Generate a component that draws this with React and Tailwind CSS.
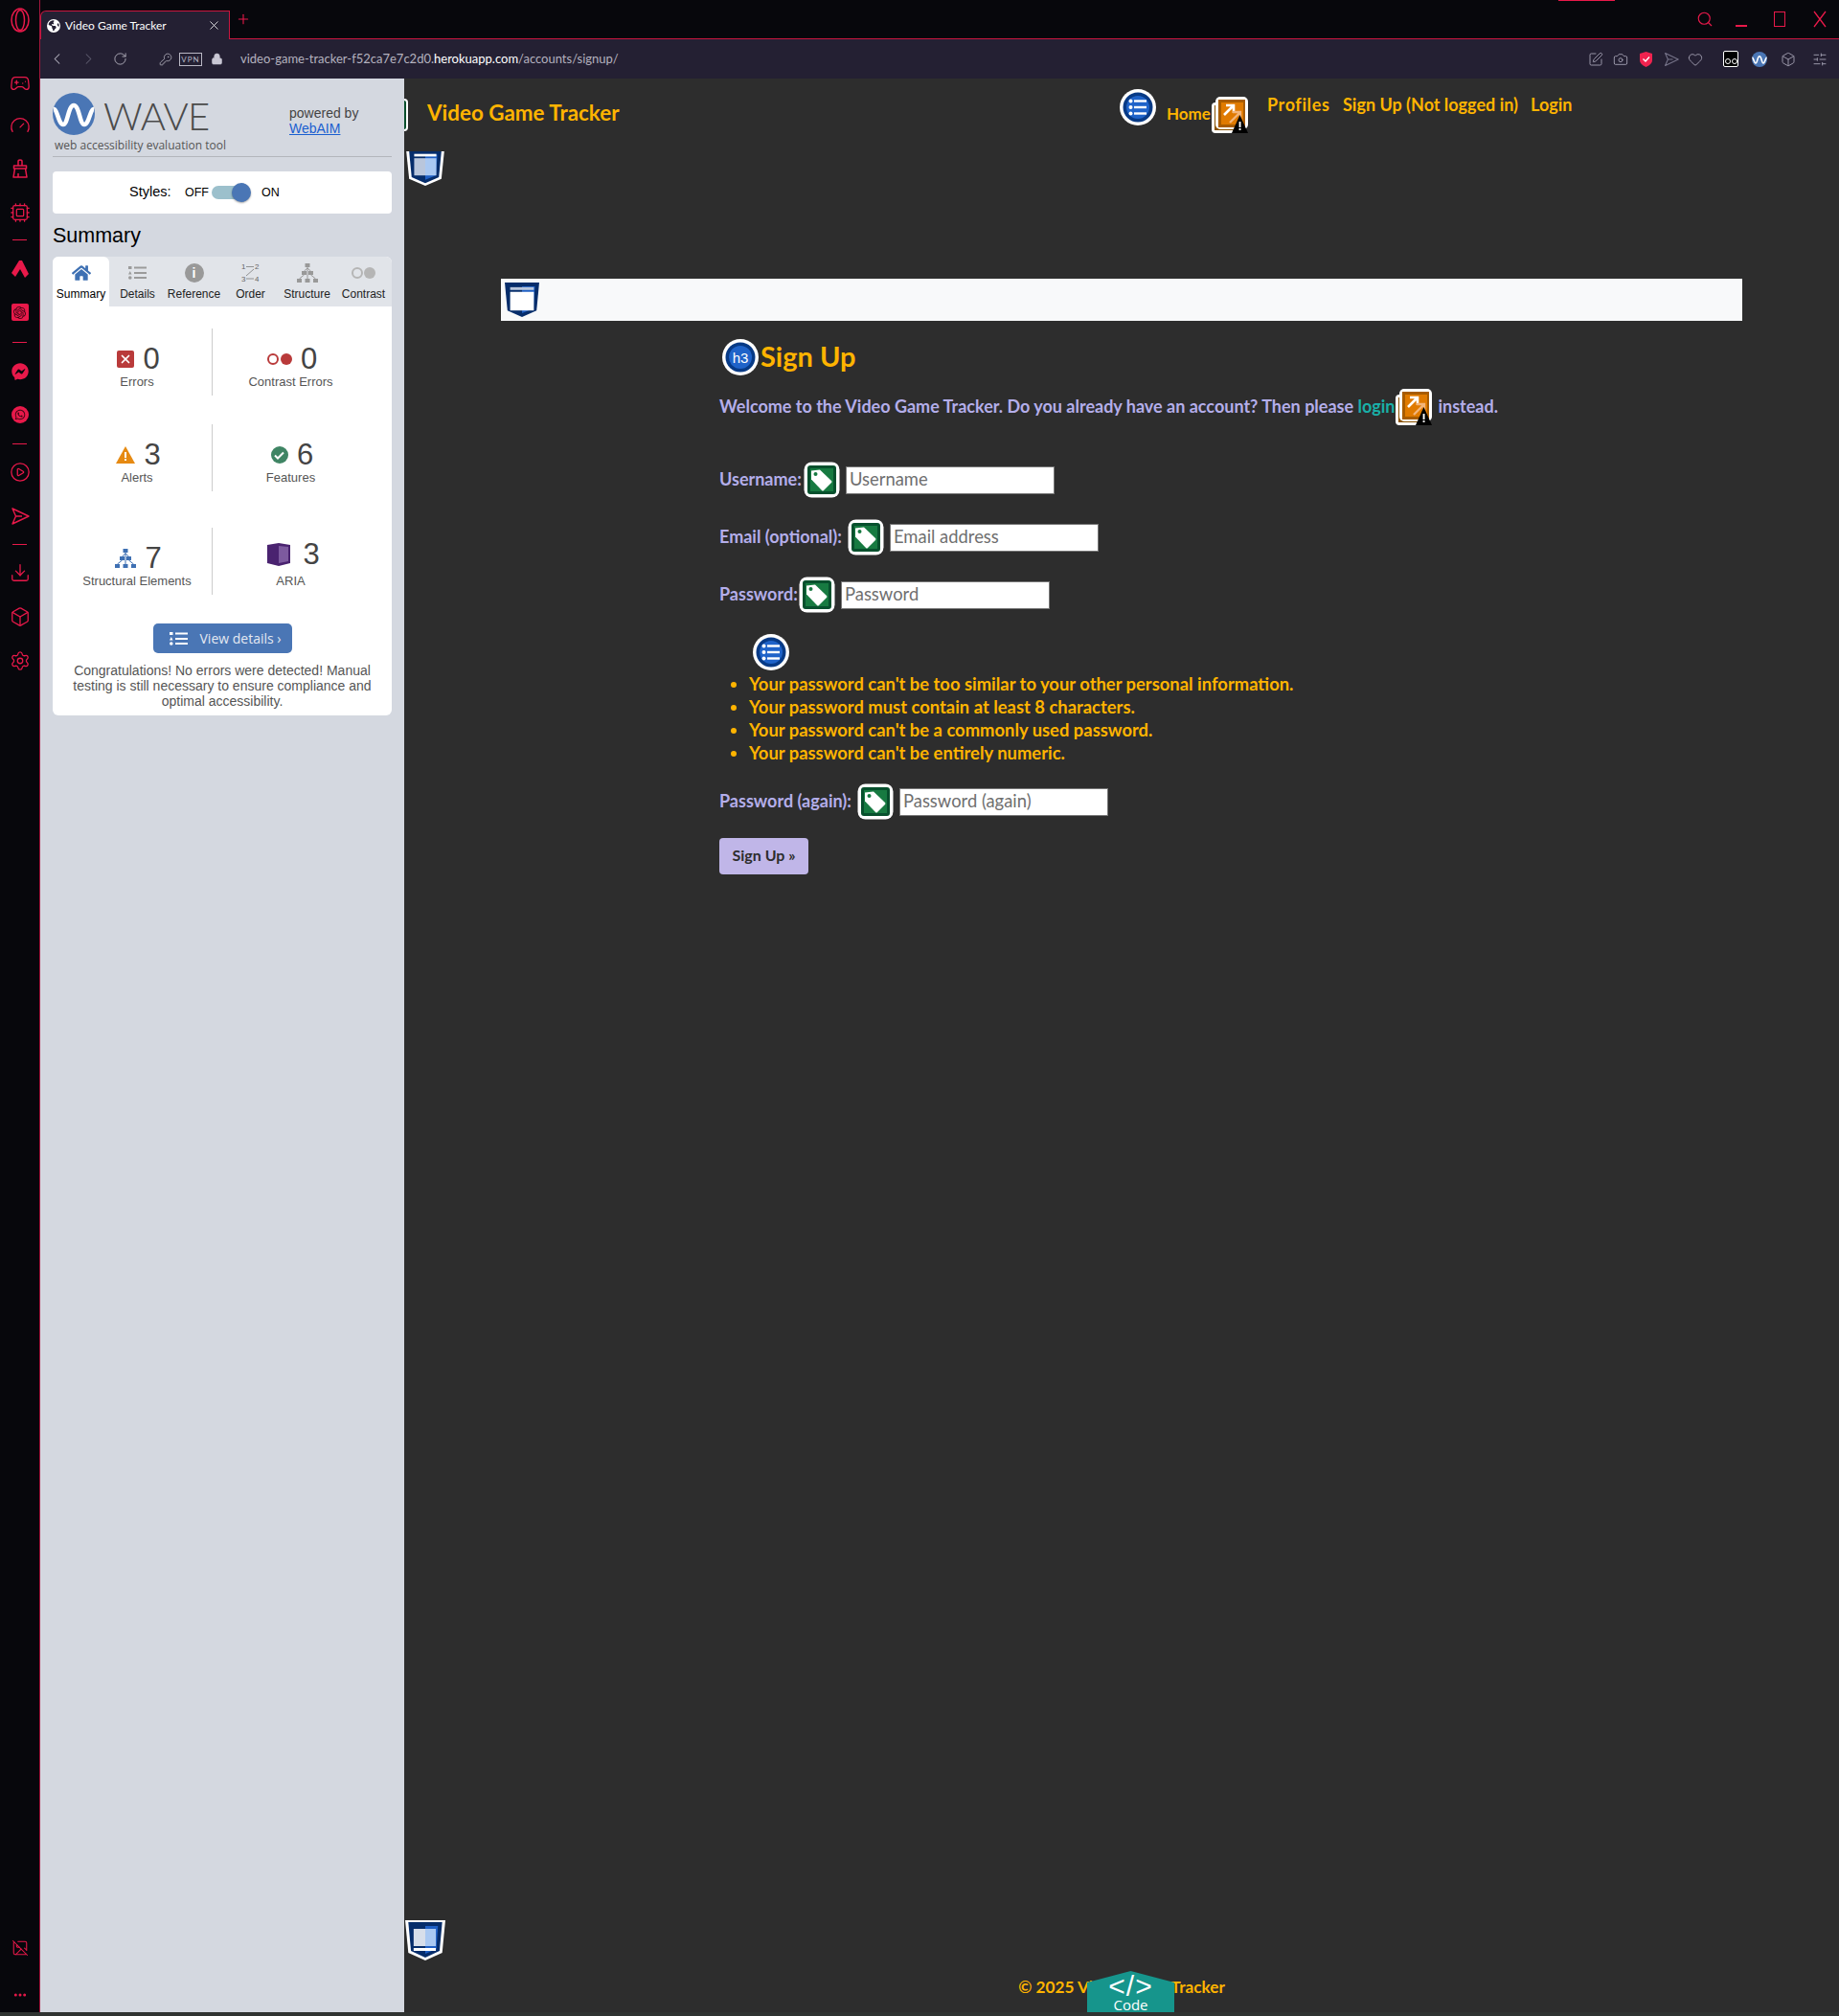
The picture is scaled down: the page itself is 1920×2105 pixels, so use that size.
import React from 'react';
import { Gamepad2, Gauge, Cpu, CirclePlay, Download, Box, Settings, Search, X, Plus, ChevronLeft, ChevronRight, RotateCw, KeyRound, Lock, Camera, Heart, SquarePen, SlidersHorizontal, Ellipsis, ImageOff } from 'lucide-react';
import { FaFacebookMessenger, FaWhatsapp, FaHome } from 'react-icons/fa';
import { SiOpenai } from 'react-icons/si';
import { FaEarthAmericas } from 'react-icons/fa6';

const red = '#e8194a';

function TagIcon() {
  return (
    <svg width="38" height="38" viewBox="0 0 38 38" className="shrink-0">
      <rect x="0.5" y="0.5" width="37" height="37" rx="8" fill="#fff" />
      <rect x="4" y="4" width="30" height="30" rx="3" fill="#07502d" />
      <rect x="7" y="7" width="24" height="24" fill="#177a41" />
      <path d="M8 9.5 L17 8.5 L29 20 Q30 21 29 22 L21 30 Q20 31 19 30 L8 18.5 Z" fill="#fff" />
      <circle cx="12.5" cy="13" r="2" fill="#177a41" />
    </svg>
  );
}

function ListIcon() {
  return (
    <svg width="38" height="38" viewBox="0 0 38 38" className="shrink-0">
      <circle cx="19" cy="19" r="19" fill="#fff" />
      <circle cx="19" cy="19" r="15.5" fill="#073a86" />
      <circle cx="19" cy="19" r="12" fill="#1f63c9" />
      <circle cx="11.5" cy="12.5" r="2" fill="#fff" />
      <circle cx="11.5" cy="19" r="2" fill="#fff" />
      <circle cx="11.5" cy="25.5" r="2" fill="#fff" />
      <rect x="15" y="11.3" width="13" height="2.4" fill="#fff" />
      <rect x="15" y="17.8" width="13" height="2.4" fill="#fff" />
      <rect x="15" y="24.3" width="13" height="2.4" fill="#fff" />
    </svg>
  );
}

function LinkIcon() {
  return (
    <svg width="38" height="38" viewBox="0 0 38 38" className="shrink-0">
      <rect x="0" y="6" width="32" height="32" rx="4" fill="#fff" />
      <rect x="3" y="9" width="28" height="26" fill="#8a5200" />
      <rect x="4" y="0" width="34" height="34" rx="5" fill="#fff" />
      <rect x="7" y="3" width="28" height="29" fill="#a85c00" />
      <rect x="10" y="6" width="23" height="23" fill="#e07a00" />
      <path d="M13 19 L23 9 M15 9 H23 V17" stroke="#fff" strokeWidth="2.6" fill="none" />
      <path d="M19 27 L29 17 M22 16 H30 V24" stroke="#f3b57a" strokeWidth="2.4" fill="none" />
      <path d="M29.5 19 L38 38 H21 Z" fill="#000" />
      <rect x="28.6" y="26" width="1.9" height="6" fill="#fff" />
      <rect x="28.6" y="33" width="1.9" height="2" fill="#fff" />
    </svg>
  );
}

function Landmark({ variant }) {
  const outline = variant !== 'main';
  const box = variant === 'main' ? '3 2 32 37' : variant === 'header' ? '0 2 38 40' : '0 0 38 42';
  return (
    <svg width={variant === 'main' ? 36 : variant === 'footer' ? 42 : 40} height={variant === 'footer' ? 42 : 36} viewBox={box} preserveAspectRatio="none" className="shrink-0">
      {outline && <path d="M0 0 H38 L35 34 L19 42 L3 34 Z" fill="#fff" />}
      <path d="M3 2 H35 L32.5 32 L19 39 L5.5 32 Z" fill="#062d6b" />
      <path d="M19 6 H31 L29.5 30 L19 35 Z" fill="#1f5fc4" />
      {variant === 'header' && <>
        <rect x="8" y="5" width="22" height="3" fill="#fff" />
        <rect x="8" y="10" width="11" height="20" fill="#b9c6dc" />
        <rect x="19" y="10" width="11" height="20" fill="#a9c8f2" />
      </>}
      {variant === 'main' && <>
        <rect x="8" y="7" width="22" height="3" fill="#b9c6dc" />
        <rect x="8" y="12" width="22" height="20" fill="#fff" />
      </>}
      {variant === 'footer' && <>
        <rect x="8" y="9" width="11" height="18" fill="#d7deea" />
        <rect x="19" y="9" width="10" height="18" fill="#a9c8f2" />
        <rect x="8" y="29" width="21" height="3" fill="#fff" />
      </>}
    </svg>
  );
}

function WaveLogo({ size }) {
  return (
    <svg width={size} height={size} viewBox="0 0 44 44" className="shrink-0">
      <circle cx="22" cy="22" r="22" fill="#4a76b5" />
      <path d="M1 17 C5 17 6 33 11 33 C16 33 16 13 22 13 C28 13 28 33 33 33 C38 33 39 17 43 17" stroke="#fff" strokeWidth="4.5" fill="none" />
    </svg>
  );
}

function StructureIcon({ color, size = 22 }) {
  return (
    <svg width={size} height={size} viewBox="0 0 22 22" fill={color}>
      <rect x="8.5" y="1" width="5" height="4" />
      <rect x="5" y="9" width="5" height="4" />
      <rect x="12" y="9" width="5" height="4" />
      <rect x="0" y="17" width="5" height="4" />
      <rect x="8.5" y="17" width="5" height="4" />
      <rect x="17" y="17" width="5" height="4" />
      <path d="M11 5 V17 M7.5 13 L2.5 17 M14.5 13 L19.5 17 M7.5 9 L11 6 L14.5 9" stroke={color} fill="none" strokeWidth="1" />
    </svg>
  );
}

function DetailsIcon({ color, w = 19, h = 14 }) {
  return (
    <svg width={w} height={h} viewBox="0 0 19 14" fill={color}>
      <rect x="0" y="0" width="3.5" height="3" />
      <path d="M1.8 5 L3.6 8.4 H0 Z" />
      <circle cx="1.8" cy="12" r="1.8" />
      <rect x="6" y="0.5" width="13" height="2" />
      <rect x="6" y="6" width="13" height="2" />
      <rect x="6" y="11" width="13" height="2" />
    </svg>
  );
}

function SendOutline({ size, color, strokeWidth = 1.4 }) {
  return (
    <svg width={size} height={size} viewBox="0 0 20 20" fill="none" stroke={color} strokeWidth={strokeWidth} strokeLinejoin="round">
      <path d="M2 2 L19 10 L2 18 L5.5 10 Z M5.5 10 H12" />
    </svg>
  );
}

function BrushOutline({ size, color }) {
  return (
    <svg width={size} height={size} viewBox="0 0 20 20" fill="none" stroke={color} strokeWidth="1.5" strokeLinejoin="round">
      <path d="M8 7 V2.5 Q8 1 10 1 Q12 1 12 2.5 V7 M3.5 7 H16.5 V10 H3.5 Z M4.5 10 L3 19 H17 L15.5 10 M8 19 V15" />
    </svg>
  );
}

function Tab({ label, active, children }) {
  return (
    <div className={active ? 'w-[59px] h-[52px] flex flex-col items-center bg-white rounded-tl-[6px] rounded-tr-[6px] text-black' : 'w-[59px] h-[52px] flex flex-col items-center text-[#222]'}>
      <div className="h-[31px] flex items-center justify-center pt-[3px]">{children}</div>
      <div className="text-[12px] leading-[14px] mt-[1px] whitespace-nowrap">{label}</div>
    </div>
  );
}

function Stat({ icon, n, label }) {
  return (
    <div className="flex flex-col items-center pt-[16px]">
      <div className="flex items-center gap-[9px] h-[32px] ml-[3px]">
        {icon}
        <span className="text-[31px] leading-[32px] text-[#444]">{n}</span>
      </div>
      <div className="text-[13px] leading-[16px] text-[#555] whitespace-nowrap">{label}</div>
    </div>
  );
}

function SideIcon({ h, children }) {
  return <div className={"w-full flex items-center justify-center " + h}>{children}</div>;
}

function SideDash() {
  return <div className="h-[1px] w-[15px] bg-[#e8194a] shrink-0" />;
}

function Sidebar() {
  const s = { size: 22, color: red, strokeWidth: 1.4 };
  return (
    <div className="w-[42px] shrink-0 bg-[#07070c] border-r border-[#a3173d] flex flex-col items-center">
      <SideIcon h="h-[42px]">
        <svg width="20" height="26" viewBox="0 0 20 26" fill="none" stroke={red} strokeWidth="1.5"><ellipse cx="10" cy="13" rx="9" ry="12" /><ellipse cx="10" cy="13" rx="4.5" ry="10.5" /></svg>
      </SideIcon>
      <div className="h-[23px]" />
      <SideIcon h="h-[44px]"><Gamepad2 {...s} /></SideIcon>
      <SideIcon h="h-[44px]"><Gauge {...s} /></SideIcon>
      <SideIcon h="h-[46px]"><BrushOutline size={20} color={red} /></SideIcon>
      <SideIcon h="h-[46px]"><Cpu {...s} /></SideIcon>
      <div className="h-[5px]" />
      <SideDash />
      <SideIcon h="h-[60px]">
        <svg width="18" height="18" viewBox="0 0 18 18" fill={red}><path d="M8 0 H11 L18 14 L14 18 L9 9 L4 17 L0 13 Z" /></svg>
      </SideIcon>
      <SideIcon h="h-[30px]">
        <div className="w-[18px] h-[18px] rounded-[2px] bg-[#e8194a] flex items-center justify-center"><SiOpenai size={13} color="#3a0512" /></div>
      </SideIcon>
      <div className="h-[16px]" />
      <SideDash />
      <div className="h-[30px] w-full flex items-center justify-center mt-[15px]"><FaFacebookMessenger size={18} color={red} /></div>
      <SideIcon h="h-[59px]"><div className="w-[18px] h-[18px] rounded-full bg-[#e8194a] flex items-center justify-center"><FaWhatsapp size={12} color="#3a0512" /></div></SideIcon>
      <div className="h-[1px]" />
      <SideDash />
      <SideIcon h="h-[58px]"><CirclePlay {...s} /></SideIcon>
      <SideIcon h="h-[34px]"><SendOutline size={20} color={red} /></SideIcon>
      <div className="h-[12px]" />
      <SideDash />
      <SideIcon h="h-[58px]"><Download {...s} /></SideIcon>
      <SideIcon h="h-[34px]"><Box {...s} /></SideIcon>
      <SideIcon h="h-[58px]"><Settings {...s} /></SideIcon>
      <div className="mt-auto mb-[32px]"><ImageOff size={18} color={red} strokeWidth={1.4} /></div>
      <div className="mb-[10px]"><Ellipsis size={16} color={red} strokeWidth={2.5} /></div>
    </div>
  );
}

function Chrome() {
  const t = { size: 16, color: '#a09daf', strokeWidth: 1.4 };
  const cell = "w-[20px] flex justify-center";
  return (
    <>
      <div className="h-[41px] bg-[#07070c] flex relative">
        <div className="absolute right-[234px] top-0 h-[1px] w-[59px] bg-[#e8194a]" />
        <div className="mt-[11px] h-[30px] w-[198px] shrink-0 bg-[#242033] border-t border-l border-r border-[#c9163f] rounded-tl-[6px] flex items-center pl-[6px] font-['Lato',sans-serif] text-[12px] text-white">
          <FaEarthAmericas size={14} color="#fff" />
          <span className="ml-[5px] w-[148px] whitespace-nowrap">Video Game Tracker</span>
          <X size={15} color="#fff" strokeWidth={1.3} />
        </div>
        <div className="flex-1 flex flex-col">
          <div className="flex-1 flex items-center pl-[6px]">
            <Plus size={16} color={red} strokeWidth={1.6} />
            <div className="ml-auto flex items-center pr-[13px]">
              <Search size={18} color={red} strokeWidth={1.5} />
              <div className="ml-[23px] mt-[14px] w-[12px] h-[1.5px] bg-[#e8194a]" />
              <div className="ml-[28px] w-[12px] h-[16px] border border-[#e8194a]" />
              <svg width="14" height="18" viewBox="0 0 14 18" className="ml-[29px]" fill="none" stroke={red} strokeWidth="1.3"><path d="M1 1 L13 17 M13 1 L1 17" /></svg>
            </div>
          </div>
          <div className="h-[1px] bg-[#c9163f]" />
        </div>
      </div>
      <div className="h-[41px] bg-[#242033] flex items-center font-['Lato',sans-serif] text-[13px]">
        <div className="w-[8px]" />
        <ChevronLeft size={19} color="#b9b7c4" strokeWidth={1.3} />
        <div className="w-[14px]" />
        <ChevronRight size={19} color="#5f5c70" strokeWidth={1.3} />
        <div className="w-[16px]" />
        <RotateCw size={15} color="#b9b7c4" strokeWidth={1.4} />
        <div className="w-[33px]" />
        <KeyRound size={14} color="#b9b7c4" strokeWidth={1.3} />
        <div className="w-[7px]" />
        <div className="w-[24px] h-[14px] border border-[#b9b7c4] text-[8px] leading-[12px] text-center text-[#b9b7c4] tracking-[1px]">VPN</div>
        <div className="w-[9px]" />
        <Lock size={13} color="#c9c7d4" fill="#c9c7d4" strokeWidth={1.3} />
        <div className="w-[18px]" />
        <div className="text-[#b4b2bf] whitespace-nowrap w-[396px]">video-game-tracker-f52ca7e7c2d0.<span className="text-white">herokuapp.com</span>/accounts/signup/</div>
        <div className="ml-auto flex items-center pr-[10px]">
          <div className={cell}><SquarePen {...t} /></div>
          <div className={cell + " ml-[6px]"}><Camera {...t} /></div>
          <div className={cell + " ml-[6px]"}><svg width="15" height="16" viewBox="0 0 15 16"><path d="M1 2 L7.5 0 L14 2 V9 Q14 13 7.5 16 Q1 13 1 9 Z" fill="#f0234f" /><path d="M4.5 7.5 L7 10 L11 5.5" stroke="#fff" strokeWidth="1.4" fill="none" /></svg></div>
          <div className={cell + " ml-[7px]"}><SendOutline size={16} color="#77748a" /></div>
          <div className={cell + " ml-[5px]"}><Heart {...t} /></div>
          <div className={cell + " ml-[17px]"}>
            <div className="w-[16px] h-[17px] bg-black border border-white rounded-[2px] flex items-end justify-center gap-[1px] pb-[2px]">
              <span className="w-[6px] h-[6px] rounded-full border border-white" /><span className="w-[6px] h-[6px] rounded-full border border-white" />
            </div>
          </div>
          <div className={cell + " ml-[10px]"}><WaveLogo size={16} /></div>
          <div className={cell + " ml-[10px]"}><Box {...t} /></div>
          <div className={cell + " ml-[13px]"}><SlidersHorizontal {...t} /></div>
        </div>
      </div>
    </>
  );
}

function WavePanel() {
  return (
    <div className="w-[380px] shrink-0 bg-[#d4d8e0] px-[13px] font-['Liberation_Sans',Arial,sans-serif]">
      <div className="h-[82px] border-b border-[#b3b6bc] flex flex-col">
        <div className="flex mt-[15px]">
          <WaveLogo size={44} />
          <div className="ml-[9px] mt-[2px] w-[194px] text-[40px] leading-[44px] font-light text-[#4b4b4b] font-['Lato',sans-serif] tracking-[-0.5px]">WAVE</div>
          <div className="text-[14px] leading-[16px] mt-[13px] text-[#444]">
            <div>powered by</div>
            <div className="text-[#1a5fd0] underline">WebAIM</div>
          </div>
        </div>
        <div className="ml-[2px] text-[12px] leading-[16px] mt-[1px] text-[#555] font-['Open_Sans',sans-serif] whitespace-nowrap">web accessibility evaluation tool</div>
      </div>
      <div className="mt-[15px] h-[44px] bg-white rounded-[4px] flex items-center">
        <div className="ml-[80px] w-[58px] text-[14.5px] text-black">Styles:</div>
        <div className="text-[12.5px] text-black w-[28px]">OFF</div>
        <div className="w-[41px] h-[20px] relative">
          <div className="absolute left-0 top-[3px] w-[30px] h-[14px] rounded-full bg-[#9cc0cc]" />
          <div className="absolute right-0 top-0 w-[20px] h-[20px] rounded-full bg-[#4a76b5] shadow-[0_1px_2px_rgba(0,0,0,0.35)]" />
        </div>
        <div className="ml-[11px] text-[12.5px] text-black">ON</div>
      </div>
      <div className="text-[21.5px] leading-[26px] mt-[10px] text-black">Summary</div>
      <div className="mt-[9px] bg-white rounded-[6px] h-[479px] flex flex-col">
        <div className="flex bg-[#e1e4e9] rounded-tl-[6px] rounded-tr-[6px] h-[52px]">
          <Tab label="Summary" active><FaHome size={20} color="#3e70b3" /></Tab>
          <Tab label="Details"><DetailsIcon color="#9b9b9b" /></Tab>
          <Tab label="Reference">
            <div className="w-[20px] h-[20px] rounded-full bg-[#999] flex items-center justify-center text-white text-[14px] font-bold leading-none">i</div>
          </Tab>
          <Tab label="Order">
            <svg width="20" height="22" viewBox="0 0 20 22" fill="#666" fontSize="8" fontFamily="Liberation Sans"><text x="0" y="7">1</text><text x="14" y="7">2</text><text x="0" y="20">3</text><text x="14" y="20">4</text><path d="M5 4.5 H13 M13 7 L5 14 M5 17 H13" stroke="#888" strokeWidth="0.9" fill="none" /></svg>
          </Tab>
          <Tab label="Structure"><StructureIcon color="#999" /></Tab>
          <Tab label="Contrast">
            <div className="flex items-center">
              <div className="w-[12px] h-[12px] rounded-full border-2 border-[#b5b5b5]" />
              <div className="w-[12px] h-[12px] rounded-full bg-[#b5b5b5] ml-[1px]" />
            </div>
          </Tab>
        </div>
        <div className="ml-[10px] mt-[23px] w-[320px] flex flex-col">
          <div className="grid grid-cols-[156px_164px] h-[70px]">
            <Stat n="0" label="Errors" icon={<div className="w-[18px] h-[18px] rounded-[2px] bg-[#b93a3a] flex items-center justify-center"><X size={14} color="#fff" strokeWidth={3} /></div>} />
            <div className="border-l border-[#ccc]">
              <Stat n="0" label="Contrast Errors" icon={<div className="flex items-center gap-[2px]"><div className="w-[12px] h-[12px] rounded-full border-2 border-[#b93a3a]" /><div className="w-[12px] h-[12px] rounded-full bg-[#b93a3a]" /></div>} />
            </div>
          </div>
          <div className="grid grid-cols-[156px_164px] h-[70px] mt-[30px]">
            <Stat n="3" label="Alerts" icon={<svg width="20" height="18" viewBox="0 0 20 18"><path d="M10 0 L20 18 H0 Z" fill="#e68a12" /><rect x="9" y="6" width="2" height="6" fill="#fff" /><rect x="9" y="13" width="2" height="2" fill="#fff" /></svg>} />
            <div className="border-l border-[#ccc]">
              <Stat n="6" label="Features" icon={<div className="w-[18px] h-[18px] rounded-full bg-[#3f8564] flex items-center justify-center"><svg width="11" height="9" viewBox="0 0 11 9"><path d="M1 4.5 L4 7.5 L10 1.5" stroke="#fff" strokeWidth="2" fill="none" /></svg></div>} />
            </div>
          </div>
          <div className="grid grid-cols-[156px_164px] h-[70px] mt-[38px]">
            <Stat n="7" label="Structural Elements" icon={<StructureIcon color="#3e70b3" />} />
            <div className="border-l border-[#ccc] flex flex-col items-center pt-[12px]">
              <div className="flex items-center gap-[13px] h-[32px] ml-[6px]">
                <svg width="24" height="24" viewBox="0 0 24 24"><path d="M0 2 L12 0 L24 2 V21 L12 24 L0 21 Z" fill="#4a2370" /><path d="M12 3 L22 4 V19 L12 21 Z" fill="#7d5a9f" /></svg>
                <span className="text-[31px] leading-[32px] text-[#444]">3</span>
              </div>
              <div className="text-[13px] leading-[16px] text-[#555] mt-[4px]">ARIA</div>
            </div>
          </div>
        </div>
        <div className="mt-[30px] mx-auto w-[145px] h-[31px] rounded-[5px] bg-[#4a76b5] flex items-center text-[#e4e9f2] text-[14px] font-['Open_Sans',sans-serif]">
          <div className="ml-[17px] w-[32px]"><DetailsIcon color="#fff" /></div>
          <span className="whitespace-nowrap">View details ›</span>
        </div>
        <div className="mt-[10px] px-[16px] text-center text-[14px] leading-[16px] text-[#555] whitespace-nowrap">
          Congratulations! No errors were detected! Manual<br />testing is still necessary to ensure compliance and<br />optimal accessibility.
        </div>
      </div>
    </div>
  );
}

const inputClass = "ml-[6px] w-[218px] h-[29px] bg-white border border-[#777] px-[3px] pb-[2px] text-[18.4px] placeholder:text-[#6f6f6f] outline-none font-['Lato',sans-serif]";

function Field({ label, placeholder, labelW, first }) {
  return (
    <div className={first ? "flex items-center h-[38px] mt-[38px]" : "flex items-center h-[38px] mt-[22px]"}>
      <label className={"text-[#b4aeea] text-[18px] font-bold whitespace-nowrap pb-[2px] " + labelW}>{label}</label>
      <TagIcon />
      <input readOnly placeholder={placeholder} className={inputClass} />
    </div>
  );
}

function Main() {
  const nav = "text-[#ffb400] text-[18px] font-bold whitespace-nowrap leading-[20px]";
  return (
    <div className="flex-1 min-w-0 relative bg-[#2d2d2d] flex flex-col font-['Lato',sans-serif]">
      <div className="absolute left-0 top-[21px] w-[4px] h-[34px] border-2 border-l-0 border-white rounded-r-[4px] bg-[#07502d]" />
      <div className="flex h-[76px] shrink-0">
        <div className="ml-[24px] w-[723px] mt-[23px] text-[#ffb400] text-[22.4px] leading-[26px] font-bold whitespace-nowrap">Video Game Tracker</div>
        <div className="mt-[11px]"><ListIcon /></div>
        <div className="ml-[11px] mt-[27px] w-[47px] text-[#ffb400] text-[17px] font-bold whitespace-nowrap leading-[20px]">Home</div>
        <div className="mt-[19px]"><LinkIcon /></div>
        <div className={"ml-[20px] mt-[17px] w-[79px] tracking-[0.6px] " + nav}>Profiles</div>
        <div className={"mt-[17px] w-[196px] " + nav}>Sign Up (Not logged in)</div>
        <div className={"mt-[17px] " + nav}>Login</div>
      </div>
      <div className="h-[133px] shrink-0 pl-[2px]"><Landmark variant="header" /></div>
      <div className="ml-[101px] w-[1296px] h-[44px] bg-[#f8f9fa] flex items-center pl-[4px] shrink-0"><Landmark variant="main" /></div>
      <div className="ml-[329px] flex flex-col items-start">
        <div className="flex items-center h-[38px] mt-[19px] ml-[3px]">
          <svg width="38" height="38" viewBox="0 0 38 38" className="shrink-0">
            <circle cx="19" cy="19" r="19" fill="#fff" />
            <circle cx="19" cy="19" r="15.5" fill="#073a86" />
            <circle cx="19" cy="19" r="12" fill="#1f63c9" />
            <text x="19" y="24.5" fontSize="15" fill="#fff" textAnchor="middle" fontFamily="Liberation Sans">h3</text>
          </svg>
          <h3 className="ml-[2px] text-[#ffb400] text-[29px] leading-[38px] font-bold whitespace-nowrap pb-[3px]">Sign Up</h3>
        </div>
        <p className="flex items-center h-[38px] mt-[14px] text-[#b4aeea] text-[18px] font-bold whitespace-nowrap">
          <span className="pb-[2px]">Welcome to the Video Game Tracker. Do you already have an account? Then please&nbsp;</span>
          <span className="text-[#19b0a8] pb-[2px]">login</span>
          <span className="ml-[1px]"><LinkIcon /></span>
          <span className="ml-[6px] pb-[2px]">instead.</span>
        </p>
        <div className="flex flex-col">
          <Field first label="Username:" placeholder="Username" labelW="w-[88px]" />
          <Field label="Email (optional):" placeholder="Email address" labelW="w-[134px]" />
          <Field label="Password:" placeholder="Password" labelW="w-[83px]" />
        </div>
        <div className="mt-[22px] ml-[35px]"><ListIcon /></div>
        <ul className="mt-[2px] list-disc pl-[31px] text-[#ffb400] text-[18.4px] leading-[24px] font-bold marker:text-[#ffb400]">
          <li>Your password can't be too similar to your other personal information.</li>
          <li>Your password must contain at least 8 characters.</li>
          <li>Your password can't be a commonly used password.</li>
          <li>Your password can't be entirely numeric.</li>
        </ul>
        <div className="flex items-center h-[38px] mt-[20px]">
          <label className="text-[#b4aeea] text-[18px] font-bold whitespace-nowrap w-[144px] pb-[2px]">Password (again):</label>
          <TagIcon />
          <input readOnly placeholder="Password (again)" className={inputClass} />
        </div>
        <button className="mt-[19px] w-[93px] h-[38px] rounded-[4px] bg-[#c0b6e8] text-[#2d2d2d] text-[16px] font-bold pb-[2px]">Sign Up »</button>
      </div>
      <div className="mt-auto pl-[1px]"><Landmark variant="footer" /></div>
      <div className="h-[54px] shrink-0 flex items-center justify-center pt-[2px] text-[#ffb400] text-[17.2px] font-bold">© 2025 Video Game Tracker</div>
      <div className="absolute bottom-0 left-[713px] w-[91px] h-[43px] bg-[#16958c] [clip-path:polygon(50%_0,100%_28%,100%_100%,0_100%,0_28%)] flex flex-col items-center text-white overflow-hidden">
        <div className="text-[30px] leading-[25px] mt-[3px] tracking-[1px] font-['Liberation_Sans',sans-serif] font-light">&lt;/&gt;</div>
        <div className="text-[15px] leading-[15px] font-['Open_Sans',sans-serif]">Code</div>
      </div>
    </div>
  );
}

export default function App() {
  return (
    <div className="w-[1920px] h-[2105px] overflow-hidden flex flex-col bg-[#07070c]">
      <div className="flex-1 min-h-0 flex">
        <Sidebar />
        <div className="flex-1 min-w-0 flex flex-col">
          <Chrome />
          <div className="flex-1 min-h-0 flex">
            <WavePanel />
            <Main />
          </div>
        </div>
      </div>
      <div className="h-[4px] shrink-0 bg-[#2f3331]" />
    </div>
  );
}
